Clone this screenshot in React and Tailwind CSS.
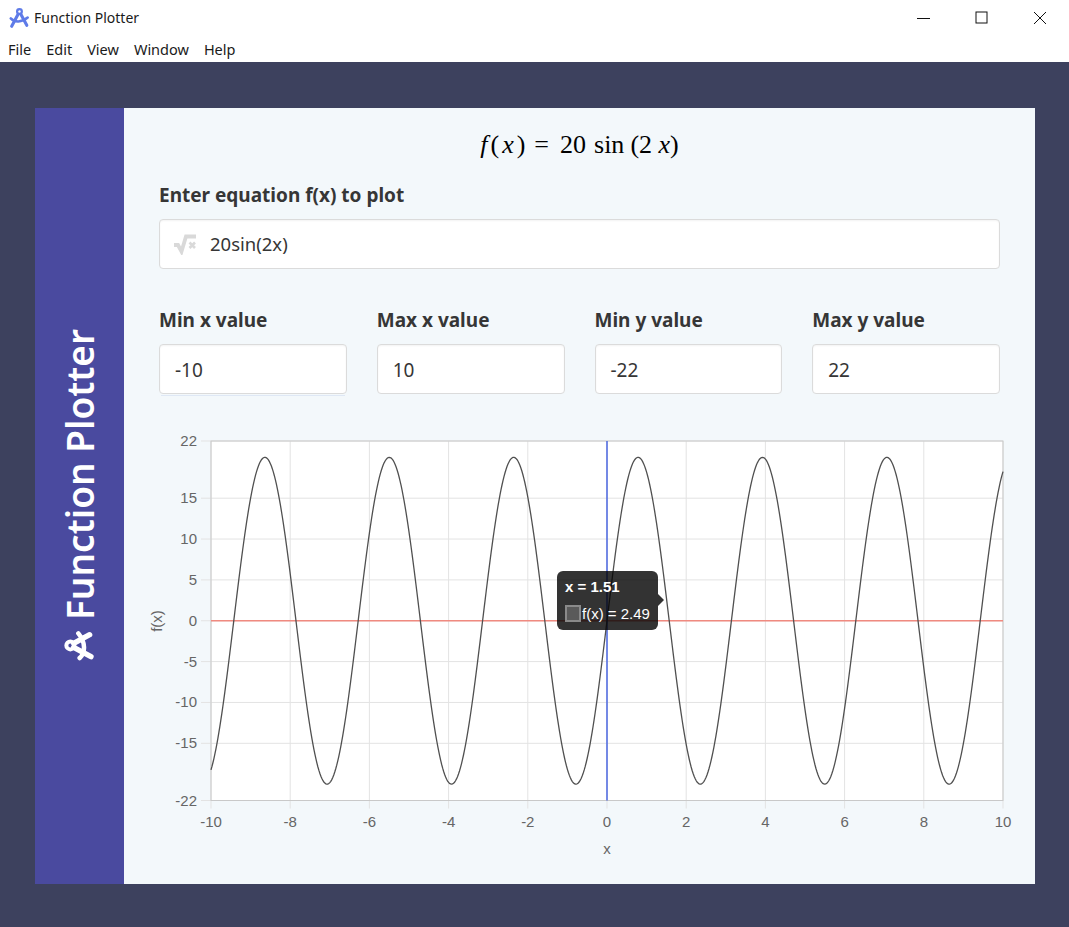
import React from "react";

const uiFont = { fontFamily: '"Noto Sans", sans-serif' };

const X_MIN = -10, X_MAX = 10, Y_MIN = -22, Y_MAX = 22;
// plot box inside the svg (svg starts at page x 145, y 430)
const LEFT = 66, RIGHT = 858, TOP = 11, BOTTOM = 370.5;

const px = (x) => LEFT + ((x - X_MIN) / (X_MAX - X_MIN)) * (RIGHT - LEFT);
const py = (y) => BOTTOM - ((y - Y_MIN) / (Y_MAX - Y_MIN)) * (BOTTOM - TOP);

const xTicks = [-10, -8, -6, -4, -2, 0, 2, 4, 6, 8, 10];
const yTicks = [22, 15, 10, 5, 0, -5, -10, -15, -22];

function curve() {
  const pts = [];
  for (let i = 0; i <= 800; i++) {
    const x = X_MIN + (i / 800) * (X_MAX - X_MIN);
    pts.push(`${px(x).toFixed(2)},${py(20 * Math.sin(2 * x)).toFixed(2)}`);
  }
  return pts.join(" ");
}

function CompassIcon({ className, color, heavy }) {
  return (
    <svg viewBox="0 0 24 24" className={className} fill="none" stroke={color} strokeLinecap="round" strokeLinejoin="round">
      <circle cx="12.5" cy={heavy ? 5.5 : 5} r={heavy ? 3 : 2.6} strokeWidth={heavy ? 3 : 2.4} />
      <path d="M11 8 L4 21" strokeWidth={heavy ? 4 : 3.4} />
      <path d="M14 8 L20.5 20" strokeWidth={heavy ? 4 : 3.4} />
      <path d="M3 12.5 C7 17 15 17 21.5 11.5" strokeWidth={heavy ? 3.4 : 2.8} />
    </svg>
  );
}

function SqrtIcon() {
  return (
    <svg viewBox="0 0 26 22" className="w-[26px] h-[22px] shrink-0">
      <path d="M2 12 H6 L9.5 18.5 L14 3.5 H24" fill="none" stroke="#d9d9d9" strokeWidth="3.8" />
      <path d="M17.5 9.5 L23 15 M23 9.5 L17.5 15" fill="none" stroke="#d9d9d9" strokeWidth="2.6" />
    </svg>
  );
}

function Chart() {
  return (
    <div className="relative -ml-[14px] w-[868px] h-[430px] mt-[36px]">
      <svg width="868" height="430" className="block" style={{ fontFamily: '"Liberation Sans", sans-serif' }}>
        <rect x={LEFT} y={TOP} width={RIGHT - LEFT} height={BOTTOM - TOP} fill="#ffffff" />
        {xTicks.map((t) => (
          <g key={t}>
            <line x1={px(t)} x2={px(t)} y1={TOP} y2={BOTTOM + 8} stroke="#e3e3e3" />
            <text x={px(t)} y={BOTTOM + 26} textAnchor="middle" fontSize="15" fill="#666666">{t}</text>
          </g>
        ))}
        {yTicks.map((t) => (
          <g key={t}>
            <line x1={LEFT - 10} x2={RIGHT} y1={py(t)} y2={py(t)} stroke="#e3e3e3" />
            <text x={LEFT - 14} y={py(t) + 5} textAnchor="end" fontSize="15" fill="#666666">{t}</text>
          </g>
        ))}
        <rect x={LEFT} y={TOP} width={RIGHT - LEFT} height={BOTTOM - TOP} fill="none" stroke="#c9c9c9" />
        <line x1={LEFT} x2={RIGHT} y1={py(0)} y2={py(0)} stroke="#f08a80" strokeWidth="1.5" />
        <line x1={px(0)} x2={px(0)} y1={TOP} y2={BOTTOM} stroke="#4a66e0" strokeWidth="1.5" />
        <polyline points={curve()} fill="none" stroke="#505050" strokeWidth="1.3" />
        <text x="462" y="424" textAnchor="middle" fontSize="15" fill="#666666">x</text>
        <text transform="translate(17 191) rotate(-90)" textAnchor="middle" fontSize="15" fill="#666666">f(x)</text>
      </svg>
      {/* hover tooltip over the plot */}
      <div className="absolute left-[412px] top-[141px] w-[101px] h-[59px] rounded-md bg-[#000000cc] text-white px-2 pt-[7px]" style={{ fontFamily: '"Liberation Sans", sans-serif' }}>
        <div className="text-[15px] leading-[18px] font-bold">x = 1.51</div>
        <div className="flex items-center mt-[9px] text-[15px] leading-[17px]">
          <span className="w-[16px] h-[17px] border-2 border-[#8a8a8a] bg-[#5a5a5a] mr-[1px] shrink-0" />
          <span>f(x) = 2.49</span>
        </div>
        <span className="absolute left-full top-[23px] border-y-[6px] border-y-transparent border-l-[6px] border-l-[#000000cc]" />
      </div>
    </div>
  );
}

function RangeField({ label, value, focused }) {
  return (
    <div>
      <div className="text-[19px] leading-[24px] font-bold text-[#363636]">{label}</div>
      <div className="relative mt-[12px]">
        <div className="h-[50px] rounded border border-[#dbdbdb] bg-white pl-[15px] pt-[2px] flex items-center text-[19px] text-[#363636] shadow-[inset_0_1px_2px_#0a0a0a0d]">{value}</div>
        {focused && <div className="absolute left-[2px] right-[2px] top-[51px] h-px bg-[#dfe8f5]" />}
      </div>
    </div>
  );
}

export default function App() {
  return (
    <div className="h-[927px] flex flex-col bg-[#3d415e]" style={uiFont}>
      <div className="bg-white h-[62px] shrink-0">
        <div className="h-[35px] flex items-center">
          <CompassIcon className="w-[22px] h-[22px] ml-[8px]" color="#5f7be8" />
          <span className="ml-[4px] text-[14px] text-[#1a1a1a]">Function Plotter</span>
          <div className="ml-auto flex items-center">
            <div className="w-[59px] flex justify-center">
              <svg width="14" height="14"><path d="M1 7.5H14" stroke="#111" /></svg>
            </div>
            <div className="w-[59px] flex justify-center">
              <svg width="13" height="13"><rect x="1" y="1" width="11" height="11" fill="none" stroke="#111" /></svg>
            </div>
            <div className="w-[58px] flex justify-center">
              <svg width="14" height="14"><path d="M1 1L13 13M13 1L1 13" stroke="#111" /></svg>
            </div>
          </div>
        </div>
        <div className="flex gap-[15px] pl-[8px] text-[14.5px] leading-[20px] text-[#1a1a1a] mt-[4px]">
          <span>File</span>
          <span>Edit</span>
          <span>View</span>
          <span>Window</span>
          <span>Help</span>
        </div>
      </div>

      <div className="pl-[35px] pr-[34px] pt-[46px]">
        <div className="flex h-[776px]">
          <div className="w-[89px] shrink-0 bg-[#4a4a9f] flex items-center justify-center">
            <div className="[writing-mode:vertical-rl] rotate-180 flex items-center gap-[10px] text-white font-semibold text-[37px] leading-none">
              <CompassIcon className="w-[32px] h-[32px] rotate-90" color="#ffffff" heavy />
              <span>Function Plotter</span>
            </div>
          </div>
          <div className="flex-1 min-w-0 bg-[#f3f8fb] px-[35px]">
            <div className="flex justify-center items-baseline pt-[19px] h-[75px] text-[26px] leading-[36px] text-black" style={{ fontFamily: '"Liberation Serif", serif' }}>
              <span className="tracking-[3px]"><i>f</i>(<i>x</i>)</span>
              <span className="ml-[6px]">=</span>
              <span className="ml-[11px]">20</span>
              <span className="ml-[8px]">sin</span>
              <span className="ml-[6px]">(2 <i>x</i>)</span>
            </div>
            <div className="text-[19px] leading-[24px] font-bold text-[#363636]">Enter equation f(x) to plot</div>
            <div className="mt-[12px] h-[50px] rounded border border-[#dbdbdb] bg-white flex items-center pl-[12px] text-[18.5px] text-[#363636] shadow-[inset_0_1px_2px_#0a0a0a0d]">
              <SqrtIcon />
              <span className="ml-[12px]">20sin(2x)</span>
            </div>
            <div className="grid grid-cols-4 gap-[30px] mt-[39px]">
              <RangeField label="Min x value" value="-10" focused />
              <RangeField label="Max x value" value="10" />
              <RangeField label="Min y value" value="-22" />
              <RangeField label="Max y value" value="22" />
            </div>
            <Chart />
          </div>
        </div>
      </div>
    </div>
  );
}
